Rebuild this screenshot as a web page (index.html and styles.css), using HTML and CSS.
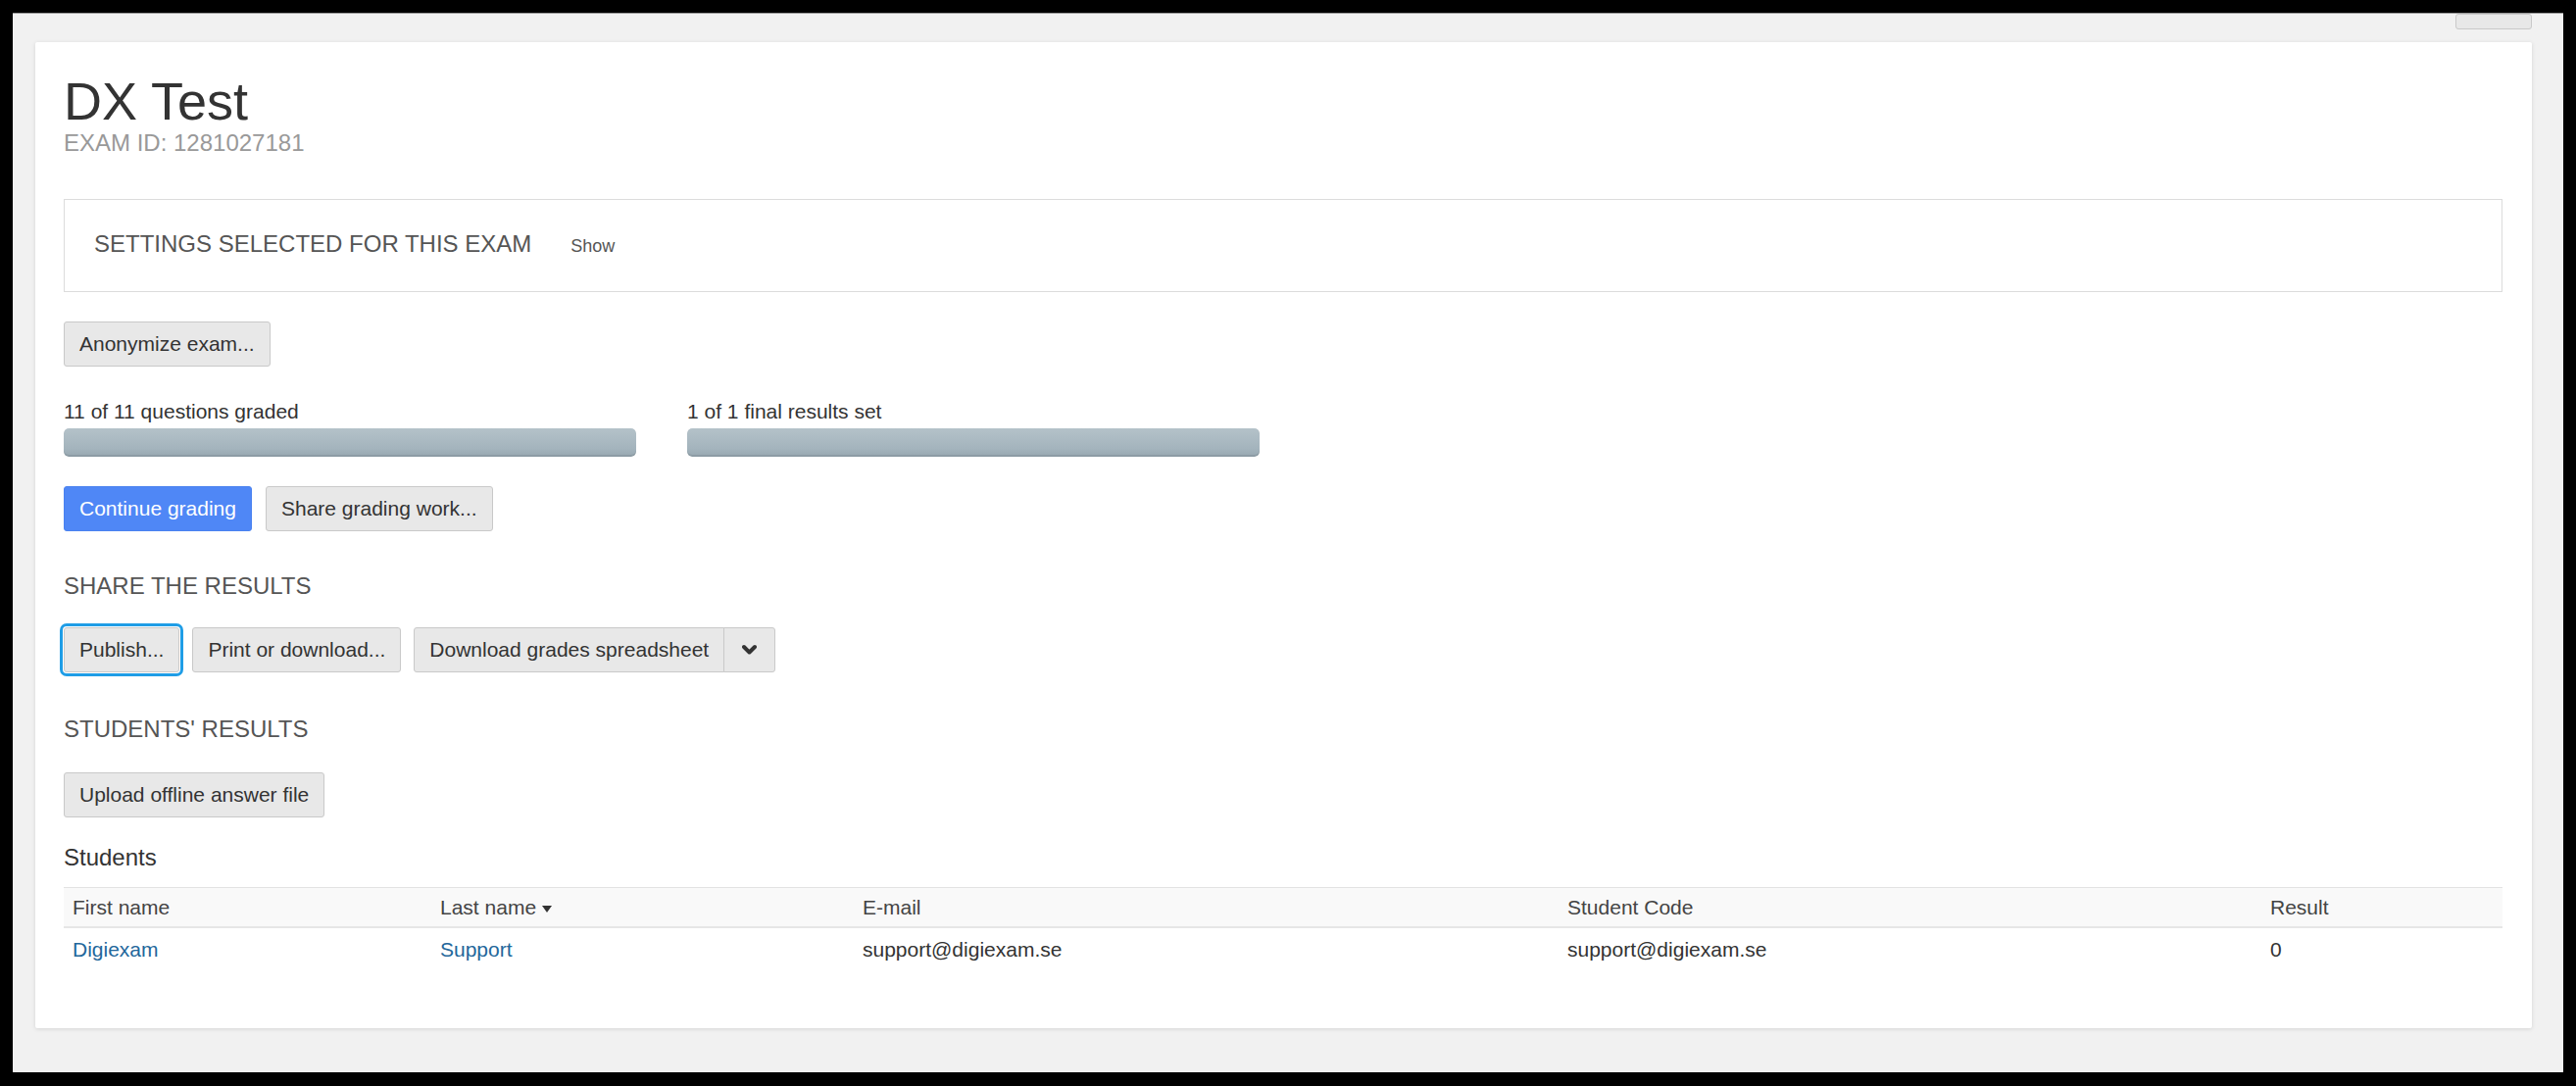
FILE: index.html
```html
<!DOCTYPE html>
<html lang="en">
<head>
<meta charset="utf-8">
<title>DX Test</title>
<link rel="stylesheet" href="styles.css">
</head>
<body>
<div class="window">
  <div class="topbar"><button class="btn tab-btn" aria-label="menu"></button></div>
  <main class="card">
    <h1 class="title">DX Test</h1>
    <div class="exam-id">EXAM ID: 1281027181</div>

    <section class="settings">
      <span class="settings-title">SETTINGS SELECTED FOR THIS EXAM</span>
      <a class="show">Show</a>
    </section>

    <div class="row row-anon"><button class="btn">Anonymize exam...</button></div>

    <div class="progress-row">
      <div class="progress-item">
        <div class="progress-label">11 of 11 questions graded</div>
        <div class="progress"><div class="progress-bar" style="width:100%"></div></div>
      </div>
      <div class="progress-item">
        <div class="progress-label">1 of 1 final results set</div>
        <div class="progress"><div class="progress-bar" style="width:100%"></div></div>
      </div>
    </div>

    <div class="row row-grade">
      <button class="btn btn-primary">Continue grading</button>
      <button class="btn">Share grading work...</button>
    </div>

    <h2 class="section-title share-title">SHARE THE RESULTS</h2>
    <div class="row row-share">
      <button class="btn btn-focus">Publish...</button>
      <button class="btn">Print or download...</button>
      <div class="btn-group">
        <button class="btn btn-left">Download grades spreadsheet</button>
        <button class="btn btn-right caret-btn" aria-label="more">
          <svg width="15" height="12" viewBox="0 0 15 12"><path d="M2 3 L7.5 8.5 L13 3" fill="none" stroke="#333" stroke-width="4" stroke-linejoin="round" stroke-linecap="round"/></svg>
        </button>
      </div>
    </div>

    <h2 class="section-title students-results">STUDENTS' RESULTS</h2>
    <div class="row row-upload"><button class="btn">Upload offline answer file</button></div>

    <h3 class="students-title">Students</h3>
    <table class="students">
      <colgroup>
        <col class="c1"><col class="c2"><col class="c3"><col class="c4"><col class="c5">
      </colgroup>
      <thead>
        <tr>
          <th>First name</th>
          <th>Last name<span class="sort-caret"></span></th>
          <th>E-mail</th>
          <th>Student Code</th>
          <th>Result</th>
        </tr>
      </thead>
      <tbody>
        <tr>
          <td><a class="link">Digiexam</a></td>
          <td><a class="link">Support</a></td>
          <td>support@digiexam.se</td>
          <td>support@digiexam.se</td>
          <td>0</td>
        </tr>
      </tbody>
    </table>
  </main>
</div>
</body>
</html>
```

FILE: styles.css
```css
html, body {
  margin: 0;
  padding: 0;
}

body {
  background: #000;
  padding: 13px;
  font-family: "Liberation Sans", Arial, sans-serif;
  color: #333;
  font-size: 21px;
  line-height: 30px;
}

.window {
  background: #f1f1f1;
  height: 1081px;
  box-sizing: border-box;
  border-top: 1px solid #9a9a9a;
  overflow: hidden;
}

.topbar {
  display: flex;
  justify-content: flex-end;
  height: 13px;
  padding-right: 32px;
}

.tab-btn {
  width: 78px;
  height: 14px;
  padding: 0;
  border-top: none;
  border-radius: 0 0 4px 4px;
}

.card {
  display: block;
  background: #fff;
  margin: 16px 32px 0 23px;
  padding: 32px 30px 58px 29px;
  box-shadow: 0 1px 4px rgba(0, 0, 0, 0.12);
  border-radius: 2px;
}

.title {
  margin: 0;
  font-size: 54px;
  line-height: 57px;
  font-weight: normal;
  color: #333;
}

.exam-id {
  font-size: 24px;
  line-height: 27px;
  color: #999;
}

.settings {
  margin-top: 44px;
  border: 1px solid #dcdcdc;
  padding: 28px 30px 29px;
  display: flex;
  align-items: baseline;
  gap: 40px;
  line-height: 33px;
}

.settings-title {
  font-size: 24px;
  color: #555;
}

.show {
  font-size: 18px;
  color: #555;
  cursor: pointer;
}

.row {
  display: flex;
  align-items: center;
  gap: 14px;
}

.row-anon { margin-top: 30px; }
.row-grade { margin-top: 30px; }
.row-share { margin-top: 26px; gap: 13px; }
.row-upload { margin-top: 28px; }

.btn {
  font-family: "Liberation Sans", Arial, sans-serif;
  font-size: 21px;
  line-height: 30px;
  color: #333;
  background: #e8e8e8;
  border: 1px solid #c9c9c9;
  border-radius: 3px;
  padding: 7px 15px;
  margin: 0;
  cursor: pointer;
  white-space: nowrap;
}

.btn-primary {
  background: #4f87f6;
  border-color: #4a82f0;
  color: #fff;
}

.btn-focus {
  box-shadow: 0 0 0 1px #fff, 0 0 0 4px #1f9de6;
  border-radius: 3px;
}

.btn-group {
  display: flex;
}

.btn-left {
  border-radius: 3px 0 0 3px;
}

.btn-right {
  border-radius: 0 3px 3px 0;
  margin-left: -1px;
}

.caret-btn {
  width: 53px;
  padding: 7px 0;
  display: flex;
  align-items: center;
  justify-content: center;
  height: 46px;
}

.progress-row {
  margin-top: 31px;
  display: flex;
  gap: 52px;
}

.progress-item {
  width: 584px;
}

.progress-label {
  font-size: 21px;
  line-height: 30px;
  color: #333;
  margin-bottom: 2px;
}

.progress {
  height: 29px;
  background: #eee;
  border-radius: 5px;
  overflow: hidden;
}

.progress-bar {
  height: 100%;
  background: linear-gradient(to bottom, #b4c2c9 0%, #a4b4bd 70%, #97a8b1 100%);
  box-shadow: inset 0 -2px 0 rgba(0, 0, 0, 0.08);
  border-radius: 5px;
}

.section-title {
  margin: 0;
  font-size: 24px;
  line-height: 33px;
  font-weight: normal;
  color: #555;
}

.share-title { margin-top: 39px; }
.students-results { margin-top: 41px; }

.students-title {
  margin: 25px 0 0;
  font-size: 24px;
  line-height: 32px;
  font-weight: normal;
  color: #333;
}

.students {
  margin-top: 14px;
  width: 100%;
  border-collapse: collapse;
  table-layout: fixed;
  font-size: 21px;
}

.c1 { width: 375px; }
.c2 { width: 431px; }
.c3 { width: 719px; }
.c4 { width: 717px; }

.students th {
  text-align: left;
  font-weight: normal;
  color: #444;
  background: #f9f9f9;
  border-top: 1px solid #e2e2e2;
  border-bottom: 2px solid #e6e6e6;
  padding: 5px 9px 4px;
  line-height: 30px;
}

.students td {
  padding: 7px 9px;
  line-height: 30px;
  color: #333;
}

.link {
  color: #23679b;
  text-decoration: none;
  cursor: pointer;
}

.sort-caret {
  display: inline-block;
  width: 0;
  height: 0;
  margin-left: 6px;
  vertical-align: middle;
  border-top: 7px solid #333;
  border-left: 5px solid transparent;
  border-right: 5px solid transparent;
}
```
